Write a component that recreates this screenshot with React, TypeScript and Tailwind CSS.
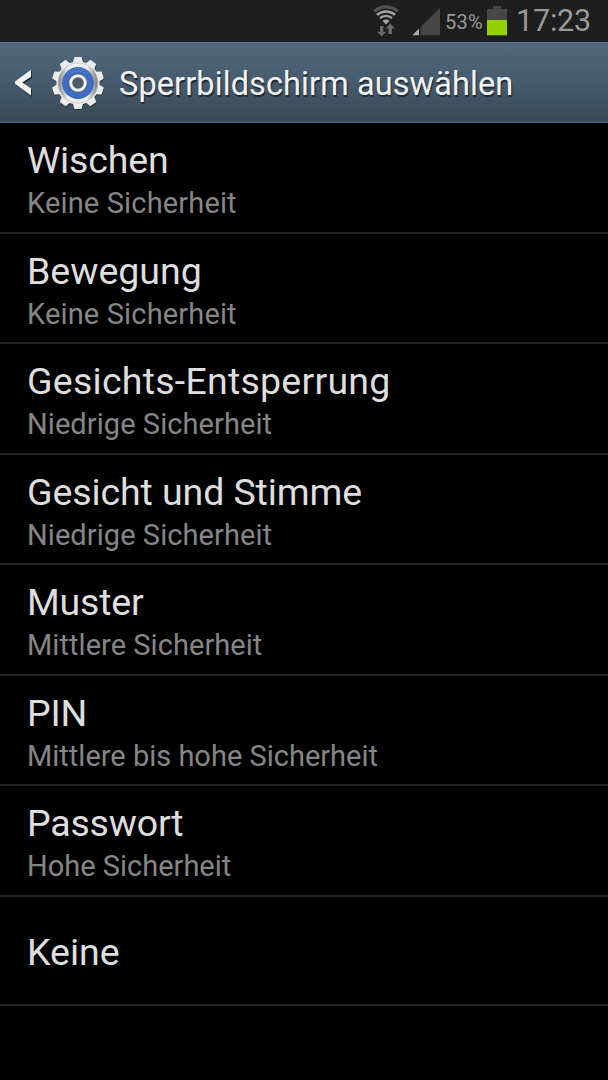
import { clsx } from "clsx";

type Option = {
  title: string;
  summary?: string;
  titleClass?: string;
  summaryClass?: string;
};

const options: Option[] = [
  { title: "Wischen", summary: "Keine Sicherheit", titleClass: "tracking-[-0.15px]", summaryClass: "tracking-[0.15px]" },
  { title: "Bewegung", summary: "Keine Sicherheit", summaryClass: "tracking-[0.15px]" },
  { title: "Gesichts-Entsperrung", summary: "Niedrige Sicherheit", titleClass: "tracking-[0.25px]", summaryClass: "tracking-[0.07px]" },
  { title: "Gesicht und Stimme", summary: "Niedrige Sicherheit", titleClass: "tracking-[-0.1px]", summaryClass: "tracking-[0.07px]" },
  { title: "Muster", summary: "Mittlere Sicherheit", titleClass: "tracking-[-0.2px]", summaryClass: "tracking-[0.05px]" },
  { title: "PIN", summary: "Mittlere bis hohe Sicherheit", titleClass: "tracking-[-0.2px]" },
  { title: "Passwort", summary: "Hohe Sicherheit", titleClass: "tracking-[-0.2px]" },
  { title: "Keine" },
];

const teeth = [0, 36, 72, 108, 144, 180, 216, 252, 288, 324];

function WifiIcon() {
  return (
    <svg className="ml-[372px] h-[42px] w-7 shrink-0" viewBox="0 0 28 42" fill="none">
      <path d="M2.2 11.4A17.5 17.5 0 0 1 25.8 11.4" stroke="#505050" strokeWidth="3.2" />
      <path d="M5 14.9A13.5 13.5 0 0 1 23 14.9" stroke="#a0a0a0" strokeWidth="2.6" />
      <path d="M8 18.2A9 9 0 0 1 20 18.2" stroke="#a0a0a0" strokeWidth="2.4" />
      <path d="M10.5 20.9Q14 18 17.5 20.9L14 24.4Z" fill="#a0a0a0" />
      <path d="M8 26h3.4v5.8h2.8l-4.5 4.8-4.5-4.8H8z" fill="#6a6a6a" />
      <path d="M16.5 34h3.4v-5.6h2.8l-4.5-5-4.5 5h2.8z" fill="#6a6a6a" />
    </svg>
  );
}

function SignalIcon() {
  return (
    <svg className="ml-3 h-[42px] w-7 shrink-0" viewBox="0 0 28 42">
      <path d="M28 8v27.3H8.7V27z" fill="#474747" />
      <path d="M7 28.5v6.8H.3z" fill="#acacac" />
    </svg>
  );
}

function BatteryIcon() {
  return (
    <svg className="h-[42px] w-5 shrink-0" viewBox="0 0 20 42">
      <path d="M6 6h8v3h6v11H0V9h6z" fill="#474747" />
      <path d="M0 20h20v15.3H0z" fill="#93d200" />
    </svg>
  );
}

function GearIcon() {
  return (
    <svg className="mt-px ml-[18px] size-[54px] shrink-0" viewBox="-27 -27 54 54">
      <defs>
        <linearGradient id="metal" x1="0" x2="1" y1="0" y2="0">
          <stop offset="0" stopColor="#989898" />
          <stop offset=".22" stopColor="#eeeeee" />
          <stop offset=".75" stopColor="#eeeeee" />
          <stop offset="1" stopColor="#8c8c8c" />
        </linearGradient>
      </defs>
      <g fill="#263541" transform="translate(.5 1)">
        {teeth.map((angle) => (
          <path key={angle} d="M-5.2-20-3.6-26H3.6L5.2-20z" transform={`rotate(${angle})`} />
        ))}
        <circle r="21.6" />
      </g>
      <g fill="#ececec">
        {teeth.map((angle) => (
          <path key={angle} d="M-5.2-20-3.6-26H3.6L5.2-20z" transform={`rotate(${angle})`} />
        ))}
        <circle r="21.6" />
      </g>
      <circle r="18" fill="none" stroke="url(#metal)" strokeWidth="4" />
      <circle r="20" fill="none" stroke="#bdbdbd" strokeWidth=".7" />
      <circle r="16" fill="#3e6cc0" />
      <path
        d="M-10.5-9.5A14 14 0 0 1 10.5-9.5M-8.5-8.5A12 12 0 0 1 8.5-8.5"
        fill="none"
        stroke="#88a7dc"
        strokeWidth="1"
        strokeDasharray="1 2"
      />
      <circle r="7.5" fill="#475b6b" stroke="#555e70" strokeWidth="4" />
      <circle r="7.3" fill="none" stroke="#efefef" strokeWidth="3" />
    </svg>
  );
}

function StatusBar() {
  return (
    <div className="flex h-[42px] bg-[#1e1e1e] text-[#999999]">
      <WifiIcon />
      <SignalIcon />
      <span className="w-[47px] shrink-0 pl-[5px] text-[20px] leading-[44px] tracking-[0.2px]">53%</span>
      <BatteryIcon />
      <span className="pl-[9px] text-[30.5px] leading-[42px] tracking-[-0.2px]">17:23</span>
    </div>
  );
}

function ActionBar() {
  return (
    <header className="flex h-[81px] items-center border-t border-b-2 border-t-[#5a748c] border-b-[#3e5b75] bg-linear-to-b from-[#50677c] via-[#465b6d] to-[#3a4954]">
      <svg className="mt-px ml-[14px] h-7 w-[19px] shrink-0" viewBox="0 0 19 28">
        <path d="M18 2v7.2L9.5 14.8 18 20.8V28L2 16.3v-2.5z" fill="#202d37" />
        <path d="M17 .8v7L8.2 13.5 17 19.5v7L1 14.8v-2.4z" fill="#f2f2f2" />
      </svg>
      <GearIcon />
      <h1 className="pt-1 pl-3.5 text-[32.5px] tracking-[0.1px] whitespace-nowrap text-[#f3f3f3] [text-shadow:1px_2px_1px_#1f2a33]">
        Sperrbildschirm auswählen
      </h1>
    </header>
  );
}

function OptionRow({ title, summary, titleClass, summaryClass }: Option) {
  return (
    <li
      className={clsx(
        "flex flex-col border-b-2 border-[#242424] pl-[27px] whitespace-nowrap",
        summary ? "h-[110.5px] pt-[15px]" : "h-[109.5px] justify-center pt-1",
      )}
    >
      <span className={clsx("text-[37.5px] leading-[44px] text-[#dedede]", titleClass)}>{title}</span>
      {summary && (
        <span className={clsx("text-[29px] leading-[42px] text-[#868686]", summaryClass)}>{summary}</span>
      )}
    </li>
  );
}

export default function App() {
  return (
    <main className="h-[1080px] w-[608px] overflow-hidden bg-black font-['Roboto',sans-serif]">
      <StatusBar />
      <ActionBar />
      <ul>
        {options.map((option) => (
          <OptionRow key={option.title} {...option} />
        ))}
      </ul>
    </main>
  );
}
